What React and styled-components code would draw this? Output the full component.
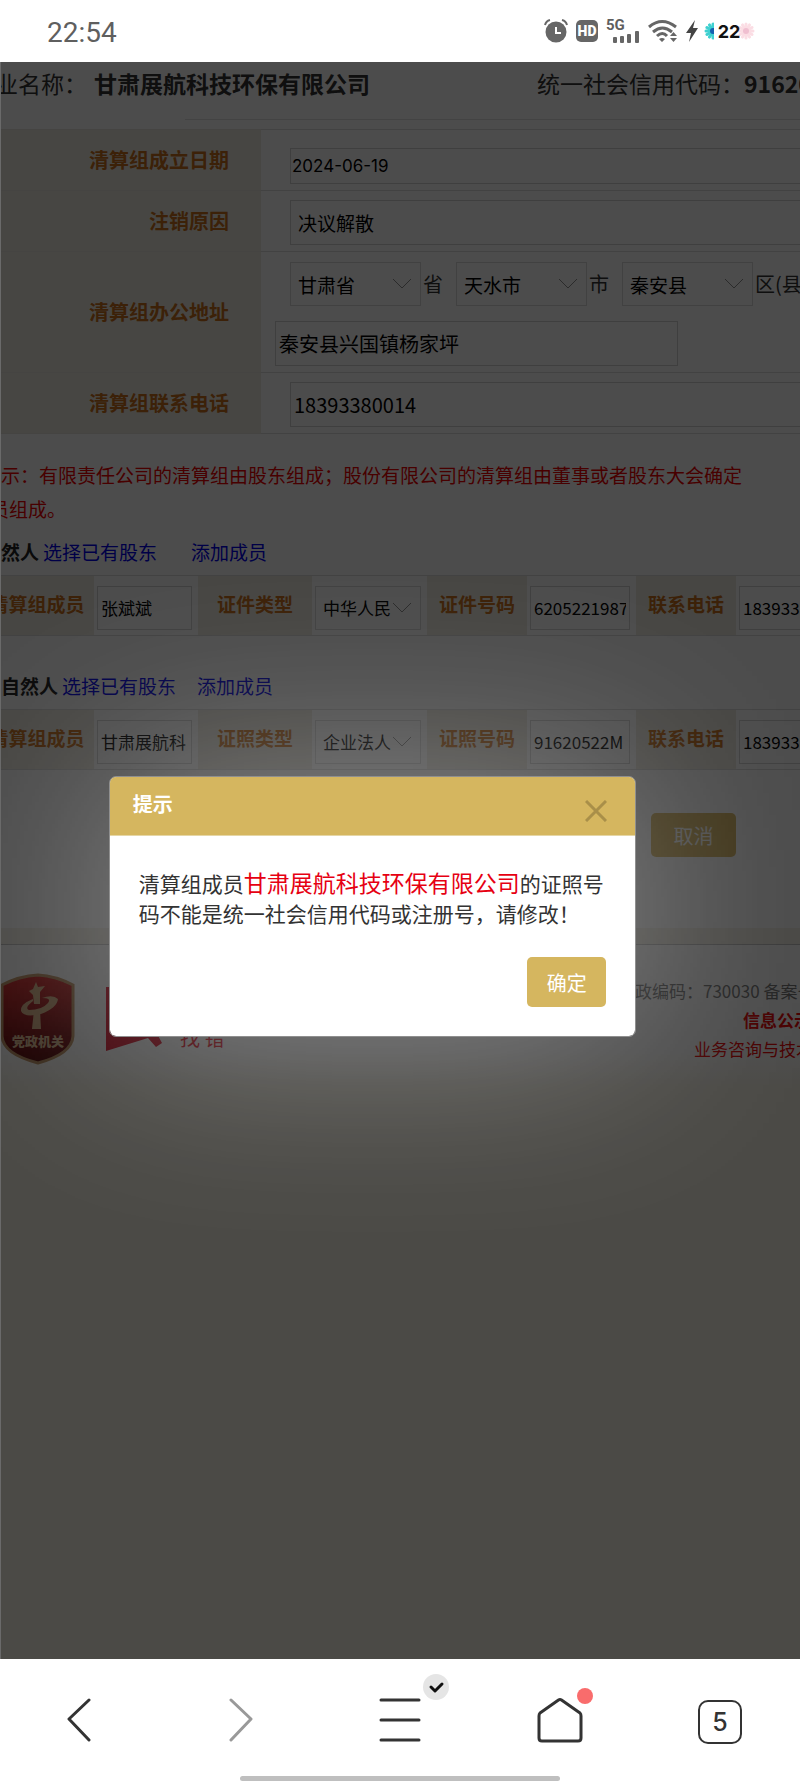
import { useState } from "react";
import styled, { createGlobalStyle } from "styled-components";

const GlobalStyle = createGlobalStyle`
  * {
    box-sizing: border-box;
  }

  body {
    margin: 0;
    background-color: #ffffff;
    font-family: "Noto Sans CJK SC", "Noto Sans", sans-serif;
  }

  button, input, select {
    font-family: inherit;
    margin: 0;
  }
`;

const Screen = styled.div`
  display: flex;
  flex-direction: column;
  min-height: 100vh;
  overflow: hidden;
`;

const StatusBar = styled.header`
  display: flex;
  align-items: center;
  height: 62px;
  padding: 0 45px 0 47px;
  color: #5f5f5f;
`;

const Clock = styled.time`
  flex: 1;
  padding-top: 3px;
  font: 28px Roboto, sans-serif;
`;

const StatusIcons = styled.div`
  display: flex;
  align-items: center;
  gap: 8px;
`;

const HdBadge = styled.span`
  display: flex;
  align-items: center;
  justify-content: center;
  width: 22px;
  height: 22px;
  border-radius: 5px;
  background-color: #666666;
  color: #ffffff;
  font: 900 14px Roboto, sans-serif;
`;

const Signal = styled.span`
  position: relative;
  width: 34px;
  height: 24px;
`;

const SignalLabel = styled.span`
  position: absolute;
  top: 0;
  left: 0;
  font: 700 15px/13px Roboto, sans-serif;
`;

const Battery = styled.span`
  position: relative;
  display: flex;
  align-items: center;
  justify-content: center;
  width: 52px;
  height: 24px;
  margin-left: -3px;
  color: #111111;
  font: 700 18px Inter, sans-serif;
`;

const BatteryArt = styled.svg`
  position: absolute;
  inset: 0;
  z-index: -1;
`;

const Viewport = styled.main`
  position: relative;
  flex: 1;
  overflow: hidden;
  background-color: #fbf8ec;
`;

const Sheet = styled.div`
  width: calc(100% + 240px);
  margin-left: -40px;
  background-color: #ffffff;
`;

const Company = styled.div`
  display: flex;
  align-items: center;
  height: 42px;
  padding-left: 12px;
  color: #333333;
  font-size: 23px;
`;

const CompanyName = styled.strong`
  width: 443px;
  margin-left: 7px;
`;

const Rule = styled.hr`
  height: 1px;
  margin: 15px 0 9px 225px;
  border: none;
  background-color: #e2e2e2;
`;

const FormTable = styled.table`
  width: 100%;
  border-collapse: collapse;
`;

const FormLabel = styled.th`
  width: 301px;
  padding: 0 32px 2px 0;
  border-top: 1px solid #e6e4dd;
  border-bottom: 1px solid #e6e4dd;
  background-color: #efece1;
  color: #c8701c;
  font-size: 20px;
  text-align: right;
`;

const FormCell = styled.td`
  height: ${(props) => (props.$tall ? "121px" : "61px")};
  padding: 0 0 6px ${(props) => (props.$tall ? "14px" : "29px")};
  border-top: 1px solid #dddddd;
  border-bottom: 1px solid #dddddd;
  vertical-align: bottom;
`;

const TextInput = styled.input`
  display: block;
  width: ${(props) => props.$width || "100%"};
  height: ${(props) => (props.$short ? "36px" : "45px")};
  padding: 0 3px;
  border: 1px solid #d4d4d4;
  border-radius: 0;
  background-color: transparent;
  color: #000000;
  font-size: 20px;
  outline: none;
`;

const DateInput = styled(TextInput)`
  padding: 0 1px;
  font-family: Inter, sans-serif;
  font-size: 17px;
`;

const ReasonInput = styled(TextInput)`
  padding: 0 7px;
  font-size: 19px;
`;

const Region = styled.div`
  display: flex;
  align-items: center;
  margin: 0 0 15px 15px;
  font-size: 20px;
  line-height: 30px;
  color: #333333;
  white-space: nowrap;
`;

const RegionUnit = styled.span`
  width: ${(props) => props.$width || "35px"};
  padding-left: 2px;
`;

const SelectBox = styled.span`
  display: block;
  position: relative;
  width: ${(props) => props.$width};
`;

const Select = styled.select`
  display: block;
  appearance: none;
  width: 100%;
  height: 44px;
  padding: 0 7px;
  border: 1px solid #dadada;
  border-radius: 0;
  background-color: transparent;
  color: #000000;
  font-size: ${(props) => (props.$small ? "17px" : "19px")};
`;

const Chevron = styled.svg`
  position: absolute;
  top: 15px;
  right: 9px;
  pointer-events: none;
`;

const Hint = styled.p`
  margin: 0;
  padding: 24px 0 1px 11px;
  color: #f00000;
  font-size: 19px;
  line-height: 34px;
  text-indent: 11px;
`;

const MemberBar = styled.div`
  display: flex;
  align-items: center;
  height: 48px;
  padding-left: 22px;
  font-size: 19px;
`;

const MemberKind = styled.strong`
  margin-right: 4px;
  color: #222222;
`;

const MemberLink = styled.a`
  margin-right: ${(props) => props.$gap || "0"};
  color: #0000ee;
  text-decoration: none;
`;

const MemberTable = styled.table`
  width: calc(100% - 20px);
  margin: 0 0 25px 20px;
  border-collapse: collapse;
  table-layout: fixed;
`;

const MemberLabel = styled.th`
  width: ${(props) => props.$width};
  height: 60px;
  padding: 0 0 4px;
  border-top: 1px solid #dddddd;
  border-bottom: 1px solid #dddddd;
  background-color: #efece1;
  color: #c8701c;
  font-size: 19px;
  white-space: nowrap;
`;

const MemberCell = styled.td`
  width: ${(props) => props.$width};
  padding: 8px 6px 4px 3px;
  border-top: 1px solid #dddddd;
  border-bottom: 1px solid #dddddd;
`;

const MemberInput = styled(TextInput)`
  height: 44px;
  font-size: 17px;
`;

const Actions = styled.div`
  display: flex;
  padding: 18px 0 87px 691px;
`;

const GoldButton = styled.button`
  width: ${(props) => (props.$tall ? "79px" : "85px")};
  height: ${(props) => (props.$tall ? "50px" : "44px")};
  padding: 0;
  border: none;
  border-radius: 5px;
  background-color: #d5b65f;
  color: #ffffff;
  font-size: 20px;
`;

const Footer = styled.footer`
  display: flex;
  align-items: flex-start;
  height: 140px;
  padding: 28px 0 0 40px;
  border-top: 1px solid #c4c4c4;
  background: linear-gradient(#ffffff 105px, #fbf8ec 140px);
  box-shadow: 0 -16px 0 #f6f2e7;
`;

const ErrorLogo = styled.div`
  display: flex;
  flex: 0 0 150px;
  margin-left: 30px;
  padding-top: 14px;
  color: #e60012;
`;

const ErrorText = styled.span`
  padding-top: 36px;
  font-size: 20px;
  line-height: 30px;
  white-space: pre;
`;

const Contact = styled.div`
  flex: 1;
  padding: 3px 0 0 362px;
  color: #777777;
  font-size: 17px;
  line-height: 29px;
  white-space: nowrap;
`;

const ContactLine = styled.div`
  padding-left: ${(props) => props.$indent || "0"};
  color: ${(props) => (props.$red ? "#f00000" : "inherit")};
  font-weight: ${(props) => (props.$bold ? 700 : 400)};
`;

const Overlay = styled.div`
  position: absolute;
  inset: 0;
  z-index: 1;
  overflow: hidden;
  border-left: 1px solid #6a6a6a;
  background-color: rgba(0, 0, 0, 0.7);
`;

const Dialog = styled.section`
  position: relative;
  width: 66%;
  margin: 714px 0 0 13.5%;
  border: 1px solid #8f8f8f;
  border-radius: 7px;
  background-color: #ffffff;
  background-clip: padding-box;

  &::before {
    content: "";
    position: absolute;
    inset: 0;
    z-index: -1;
    background-color: rgba(255, 255, 255, 0.36);
    filter: blur(100px);
  }
`;

const DialogHeader = styled.div`
  display: flex;
  justify-content: space-between;
  height: 59px;
  padding: 12px 23px 0 23px;
  border-bottom: 1px solid #e5d6a5;
  border-radius: 6px 6px 0 0;
  background-color: #d5b65f;
`;

const DialogTitle = styled.h2`
  margin: 0;
  color: #ffffff;
  font-size: 20px;
  line-height: 30px;
`;

const CloseButton = styled.button`
  width: 32px;
  height: 48px;
  padding: 0;
  border: none;
  background: none;
`;

const Message = styled.p`
  margin: 0;
  padding: 31px 20px 29px 29px;
  color: #333333;
  font-size: 21px;
  line-height: 30px;
`;

const Highlight = styled.span`
  color: #e60012;
  font-size: 23px;
`;

const DialogFooter = styled.div`
  display: flex;
  justify-content: flex-end;
  padding: 0 29px 29px;
`;

const NavBar = styled.nav`
  display: grid;
  grid-template-columns: repeat(5, 1fr);
  height: 117px;
`;

const NavButton = styled.button`
  padding: 9px 0 0;
  border: none;
  background: none;
`;

const TabCount = styled.span`
  display: inline-flex;
  align-items: center;
  justify-content: center;
  width: 44px;
  height: 44px;
  border: 2px solid #333333;
  border-radius: 10px;
  color: #333333;
  font: 500 25px Inter, sans-serif;
`;

const HomeIndicator = styled.div`
  width: 40%;
  height: 5px;
  margin: 0 auto 2px;
  border-radius: 3px;
  background-color: #bfbfbf;
`;

const memberTables = [
  {
    kind: "自然人",
    linkGap: "34px",
    labels: ["清算组成员", "证件类型", "证件号码", "联系电话"],
    values: ["张斌斌", "中华人民", "6205221987", "18393380014"],
  },
  {
    kind: "非自然人",
    linkGap: "21px",
    labels: ["清算组成员", "证照类型", "证照号码", "联系电话"],
    values: ["甘肃展航科", "企业法人", "91620522M", "18393380014"],
  },
];

function Dropdown({ label, value, width, small }) {
  return (
    <SelectBox $width={width}>
      <Select aria-label={label} $small={small}>
        <option>{value}</option>
      </Select>
      <Chevron width="20" height="14" fill="none" stroke="#909090">
        <path d="M1 2l9 9 9-9" />
      </Chevron>
    </SelectBox>
  );
}

function AlarmIcon() {
  return (
    <svg width="24" height="24" viewBox="0 0 24 24" fill="none">
      <circle cx="12" cy="13" r="10.500" fill="#666666" />
      <path d="M1 6q1-4 5-5M23 6q-1-4-5-5" stroke="#666666" strokeWidth="2" />
      <path d="M12 8v6h5" stroke="#ffffff" strokeWidth="2" />
    </svg>
  );
}

function WifiIcon() {
  return (
    <svg width="30" height="24" viewBox="0 0 30 24" fill="none">
      <g stroke="#666666" strokeWidth="3">
        <path d="M1 8q13-11 27 0" />
        <path d="M5 13q9.500-8 19 0" />
        <path d="M9 17q5.500-5 10 0" />
      </g>
      <path d="M11 20q3-2 6 0l-3 3zM22 17l3.500-4 3.500 4zM22 19h7l-3.500 4z" fill="#666666" />
    </svg>
  );
}

function Petals({ x, color, core, clip }) {
  return (
    <g clipPath={clip}>
      <g transform={`translate(${x} 12)`}>
        <g stroke={color} strokeWidth="3" strokeLinecap="round">
          {[0, 30, 60, 90, 120, 150].map((angle) => (
            <path key={angle} d="M-7 0H7" transform={`rotate(${angle})`} />
          ))}
        </g>
        <circle r="3" fill={core} />
      </g>
    </g>
  );
}

function Shield() {
  return (
    <svg width="76" height="92" viewBox="0 0 76 92">
      <defs>
        <linearGradient id="shield" x2="0" y2="1">
          <stop stopColor="#d02020" />
          <stop offset="1" stopColor="#500003" />
        </linearGradient>
      </defs>
      <path
        d="M38 2Q56 3 73 12V63Q72 81 38 90Q3 81 2 63V12Q19 3 38 2z"
        fill="url(#shield)"
        stroke="#c09060"
        strokeWidth="3"
      />
      <g fill="#d8b080">
        <path d="M33 22l-4-4 4-2 3-7 2 5 7-1-5 6v12h-6zM34 37h6l1 19H32z" />
        <path d="M33 26Q20 31 21 38Q24 45 41 41Q57 35 58 26Q53 21 42 25Q52 25 48 30Q42 37 29 37Q24 35 33 28z" />
      </g>
      <text x="38" y="73" textAnchor="middle" fill="#e0bc90" fontSize="13" fontWeight="900">
        党政机关
      </text>
    </svg>
  );
}

export default function App() {
  const [isOpen, setIsOpen] = useState(true);
  return (
    <Screen>
      <GlobalStyle />
      <StatusBar>
        <Clock>22:54</Clock>
        <StatusIcons>
          <AlarmIcon />
          <HdBadge>HD</HdBadge>
          <Signal>
            <SignalLabel>5G</SignalLabel>
            <svg width="34" height="24" fill="#666666">
              <rect x="7" y="18" width="4" height="6" rx="1" />
              <rect x="14" y="17" width="4" height="7" rx="1" />
              <rect x="21" y="15" width="4" height="9" rx="1" />
              <rect x="29" y="12" width="4" height="12" rx="1" />
            </svg>
          </Signal>
          <WifiIcon />
          <svg width="12" height="24" viewBox="0 0 12 24" fill="#444444">
            <path d="M9 1L0 14h5L3 23 12 9H7z" />
          </svg>
          <Battery>
            <BatteryArt width="52" height="24">
              <clipPath id="left-half">
                <rect width="11" height="24" />
              </clipPath>
              <Petals x={10} color="#3fd0d0" core="#1560b0" clip="url(#left-half)" />
              <Petals x={43} color="#fbdde4" core="#f0bfd0" />
            </BatteryArt>
            22
          </Battery>
        </StatusIcons>
      </StatusBar>
      <Viewport>
        <Sheet>
          <Company>
            企业名称：
            <CompanyName>甘肃展航科技环保有限公司</CompanyName>
            统一社会信用代码：<strong>91620522M</strong>
          </Company>
          <Rule />
          <FormTable>
            <tbody>
              <tr>
                <FormLabel scope="row">
                  <label htmlFor="date">清算组成立日期</label>
                </FormLabel>
                <FormCell>
                  <DateInput id="date" $short defaultValue="2024-06-19" />
                </FormCell>
              </tr>
              <tr>
                <FormLabel scope="row">
                  <label htmlFor="reason">注销原因</label>
                </FormLabel>
                <FormCell>
                  <ReasonInput id="reason" defaultValue="决议解散" />
                </FormCell>
              </tr>
              <tr>
                <FormLabel scope="row">
                  <label htmlFor="address">清算组办公地址</label>
                </FormLabel>
                <FormCell $tall>
                  <Region>
                    <Dropdown label="省" value="甘肃省" width="131px" />
                    <RegionUnit>省</RegionUnit>
                    <Dropdown label="市" value="天水市" width="131px" />
                    <RegionUnit>市</RegionUnit>
                    <Dropdown label="区(县)" value="秦安县" width="131px" />
                    <RegionUnit $width="70px">区(县)</RegionUnit>
                  </Region>
                  <TextInput id="address" $width="403px" defaultValue="秦安县兴国镇杨家坪" />
                </FormCell>
              </tr>
              <tr>
                <FormLabel scope="row">
                  <label htmlFor="phone">清算组联系电话</label>
                </FormLabel>
                <FormCell>
                  <TextInput id="phone" defaultValue="18393380014" />
                </FormCell>
              </tr>
            </tbody>
          </FormTable>
          <Hint>
            提示：有限责任公司的清算组由股东组成；股份有限公司的清算组由董事或者股东大会确定
            <br />
            成员组成。
          </Hint>
          {memberTables.map(({ kind, linkGap, labels, values }) => (
            <section key={kind}>
              <MemberBar>
                <MemberKind>{kind}</MemberKind>
                <MemberLink href="#select" $gap={linkGap}>
                  选择已有股东
                </MemberLink>
                <MemberLink href="#add">添加成员</MemberLink>
              </MemberBar>
              <MemberTable>
                <tbody>
                  <tr>
                    <MemberLabel $width="114px">{labels[0]}</MemberLabel>
                    <MemberCell $width="104px">
                      <MemberInput aria-label={labels[0]} defaultValue={values[0]} />
                    </MemberCell>
                    <MemberLabel $width="114px">{labels[1]}</MemberLabel>
                    <MemberCell $width="115px">
                      <Dropdown label={labels[1]} value={values[1]} width="106px" small />
                    </MemberCell>
                    <MemberLabel $width="100px">{labels[2]}</MemberLabel>
                    <MemberCell $width="109px">
                      <MemberInput aria-label={labels[2]} defaultValue={values[2]} />
                    </MemberCell>
                    <MemberLabel $width="100px">{labels[3]}</MemberLabel>
                    <MemberCell>
                      <MemberInput aria-label={labels[3]} defaultValue={values[3]} />
                    </MemberCell>
                  </tr>
                </tbody>
              </MemberTable>
            </section>
          ))}
          <Actions>
            <GoldButton type="button">取消</GoldButton>
          </Actions>
          <Footer>
            <Shield />
            <ErrorLogo>
              <svg width="74" height="80" viewBox="0 0 74 80" fill="#d9001b">
                <path d="M0 0H50V45L56 56 50 60 42 51 0 64z" />
              </svg>
              <ErrorText>找 错</ErrorText>
            </ErrorLogo>
            <Contact>
              <ContactLine>邮政编码：730030 备案号</ContactLine>
              <ContactLine $red $bold $indent="125px">
                信息公示
              </ContactLine>
              <ContactLine $red $indent="76px">
                业务咨询与技术
              </ContactLine>
            </Contact>
          </Footer>
        </Sheet>
        {isOpen && (
          <Overlay>
            <Dialog role="dialog" aria-labelledby="dialog-title">
              <DialogHeader>
                <DialogTitle id="dialog-title">提示</DialogTitle>
                <CloseButton type="button" aria-label="关闭" onClick={() => setIsOpen(false)}>
                  <svg width="22" height="22" stroke="#a98f49" strokeWidth="3">
                    <path d="M1 1l20 20M21 1L1 21" />
                  </svg>
                </CloseButton>
              </DialogHeader>
              <Message>
                清算组成员<Highlight>甘肃展航科技环保有限公司</Highlight>
                的证照号码不能是统一社会信用代码或注册号，请修改！
              </Message>
              <DialogFooter>
                <GoldButton type="button" $tall onClick={() => setIsOpen(false)}>
                  确定
                </GoldButton>
              </DialogFooter>
            </Dialog>
          </Overlay>
        )}
      </Viewport>
      <NavBar>
        <NavButton type="button" aria-label="后退">
          <svg width="44" height="44" fill="none" stroke="#333333" strokeWidth="3" strokeLinecap="round" strokeLinejoin="round">
            <path d="M31 2L11 21 31 42" />
          </svg>
        </NavButton>
        <NavButton type="button" aria-label="前进">
          <svg width="44" height="44" fill="none" stroke="#999999" strokeWidth="3" strokeLinecap="round" strokeLinejoin="round">
            <path d="M13 2L33 21 13 42" />
          </svg>
        </NavButton>
        <NavButton type="button" aria-label="菜单">
          <svg width="44" height="44" overflow="visible" fill="none" stroke="#333333" strokeWidth="3" strokeLinecap="round" strokeLinejoin="round">
            <path d="M3 2H41M3 22H41M3 42H41" />
            <circle cx="58" cy="-11" r="13" fill="#e5e5e5" stroke="none" />
            <path d="M53 -11l4 4 7-7" stroke="#111111" />
          </svg>
        </NavButton>
        <NavButton type="button" aria-label="主页">
          <svg width="44" height="44" overflow="visible" fill="none" stroke="#333333" strokeWidth="3" strokeLinejoin="round">
            <path d="M20.500 2q1.500-1 3 0L42 15q1 1 1 3V40q0 3-3 3H4q-3 0-3-3V18q0-2 1-3z" />
            <circle cx="47" cy="-2" r="8" fill="#f96c6c" stroke="none" />
          </svg>
        </NavButton>
        <NavButton type="button" aria-label="标签页">
          <TabCount>5</TabCount>
        </NavButton>
      </NavBar>
      <HomeIndicator />
    </Screen>
  );
}
